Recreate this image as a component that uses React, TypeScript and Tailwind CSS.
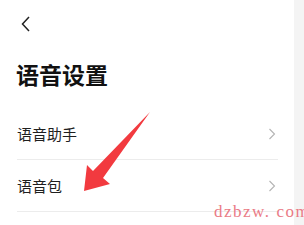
import React from "react";

const cjk = { fontFamily: '"Noto Sans CJK SC", "Noto Sans", sans-serif' };

function ChevronRight() {
  return (
    <svg width="8" height="12" viewBox="0 0 8 12" className="block">
      <path d="M1.5 1 L6.5 6 L1.5 11" fill="none" stroke="#b4b4b4" strokeWidth="1.1" />
    </svg>
  );
}

function Row({ label }: { label: string }) {
  return (
    <div className="flex h-[52px] items-center justify-between border-b border-[#ececec] pr-[2px]">
      <span className="text-[15px] leading-none text-[#1f1f1f]" style={cjk}>
        {label}
      </span>
      <ChevronRight />
    </div>
  );
}

export default function App() {
  return (
    <div className="relative flex h-[225px] w-[304px] overflow-hidden bg-white">
      <div className="flex w-[294px] flex-col bg-white">
        <div className="flex h-[48px] items-center pl-[21px]">
          <svg width="10" height="16" viewBox="0 0 10 16" className="block">
            <path d="M8 1 L1.5 8 L8 15" fill="none" stroke="#222" strokeWidth="1.5" />
          </svg>
        </div>
        <div className="mt-[10px] mb-[18px] pl-[16px]">
          <h1 className="text-[23px] font-bold leading-[32px] text-[#111]" style={cjk}>
            语音设置
          </h1>
        </div>
        <div className="ml-[17px] w-[261px]">
          <Row label="语音助手" />
          <Row label="语音包" />
        </div>
      </div>
      <div className="w-[10px] bg-[#f4f4f4]" />
      <svg
        className="absolute left-0 top-0"
        width="304"
        height="225"
        viewBox="0 0 304 225"
      >
        <polygon
          points="150,112 103,178 110,184 84,191 87,165 93,171"
          fill="#f23a3f"
        />
      </svg>
      <div
        className="absolute left-[214px] top-[203px] text-[17px] leading-none tracking-[1.5px] text-[#ea7b86]"
        style={{ fontFamily: '"Liberation Serif", serif' }}
      >
        dzbzw.<span className="ml-[6px]">com</span>
      </div>
    </div>
  );
}
